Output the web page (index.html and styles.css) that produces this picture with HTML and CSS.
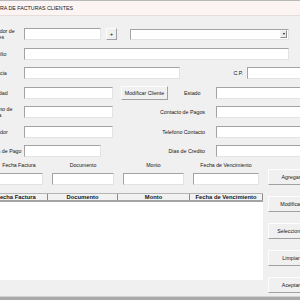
FILE: index.html
```html
<!DOCTYPE html>
<html lang="es">
<head>
    <meta charset="UTF-8">
    <meta name="viewport" content="width=device-width, initial-scale=1.0">
    <title>Captura de Facturas Clientes</title>
    <link rel="stylesheet" href="styles.css">
</head>
<body>
    <div class="window">
        <div class="title">CAPTURA DE FACTURAS CLIENTES</div>

        <div class="form">
            <div class="fields">
                <div class="row">
                    <label class="lbl">Buscador de<br>Clientes</label>
                    <input type="text" class="field w77">
                    <button class="btn plus">+</button>
                    <div class="combo"><span class="arrow"></span></div>
                </div>
                <div class="row">
                    <label class="lbl">Domicilio</label>
                    <input type="text" class="field w265">
                </div>
                <div class="row">
                    <label class="lbl">Provincia</label>
                    <input type="text" class="field w156">
                    <label class="cp">C.P.</label>
                    <input type="text" class="field w90">
                </div>
                <div class="row">
                    <label class="lbl">Localidad</label>
                    <input type="text" class="field w89">
                    <button class="btn modify">Modificar Cliente</button>
                    <label class="estado">Estado</label>
                    <input type="text" class="field w90">
                </div>
                <div class="row">
                    <label class="lbl">Telefono de<br>Oficina</label>
                    <input type="text" class="field w89">
                    <label class="side">Contacto de Pagos</label>
                    <input type="text" class="field w90">
                </div>
                <div class="row">
                    <label class="lbl">Vendedor</label>
                    <input type="text" class="field w89">
                    <label class="side">Telefono Contacto</label>
                    <input type="text" class="field w90">
                </div>
                <div class="row">
                    <label class="lbl">Forma de Pago</label>
                    <input type="text" class="field w77">
                    <label class="side wide">Dias de Credito</label>
                    <input type="text" class="field w90">
                </div>
            </div>

            <div class="lower">
                <div class="invoices">
                    <div class="captions">
                        <span class="w48">Fecha Factura</span>
                        <span class="w62">Documento</span>
                        <span class="w61">Monto</span>
                        <span class="w66">Fecha de Vencimiento</span>
                    </div>
                    <div class="entry">
                        <input type="text" class="field w48">
                        <input type="text" class="field w62">
                        <input type="text" class="field w61">
                        <input type="text" class="field w66">
                    </div>
                    <div class="table">
                        <div class="thead">
                            <div class="th">Fecha Factura</div>
                            <div class="th">Documento</div>
                            <div class="th">Monto</div>
                            <div class="th">Fecha de Vencimiento</div>
                        </div>
                        <div class="tbody"></div>
                    </div>
                </div>
                <div class="actions">
                    <button class="btn action">Agregar</button>
                    <button class="btn action">Modificar</button>
                    <button class="btn action">Seleccionar</button>
                    <button class="btn action">Limpiar</button>
                    <button class="btn action">Aceptar</button>
                </div>
            </div>
        </div>

        <div class="statusbar"></div>
    </div>
</body>
</html>
```

FILE: styles.css
```css
body {
    margin: 0;
    background-color: #f0f0f0;
    font-family: "Liberation Sans", Arial, sans-serif;
    font-size: 5.3px;
    color: #161616;
    overflow: hidden;
}
.window {
    display: flex;
    flex-direction: column;
    width: 340px;
    height: 300px;
    margin-left: -16px;
    box-sizing: border-box;
    border-top: 1px solid #b9b9b9;
}
.title {
    height: 14px;
    line-height: 14px;
    text-indent: -2px;
    background-color: #fcf3f3;
    border-bottom: 1px solid #e6dddd;
}
.form {
    flex: 1;
    padding-top: 12px;
}
.fields {
    display: flex;
    flex-direction: column;
    gap: 7.5px;
}
.row {
    display: flex;
    align-items: center;
    height: 12px;
}
.lbl {
    flex: none;
    width: 40px;
    padding-left: 1px;
    box-sizing: border-box;
    line-height: 6px;
    white-space: nowrap;
}
.field {
    flex: none;
    box-sizing: border-box;
    height: 12px;
    margin: 0;
    padding: 0;
    border: 1px solid;
    border-color: #a3a3a3 #e3e3e3 #e3e3e3 #a3a3a3;
    background-color: #fff;
}
.w48 { width: 48px; }
.w61 { width: 61px; }
.w62 { width: 62px; }
.w66 { width: 66px; }
.w77 { width: 77px; }
.w89 { width: 89px; }
.w90 { width: 90px; }
.w156 { width: 156px; }
.w265 { width: 265px; }
.btn {
    flex: none;
    box-sizing: border-box;
    padding: 0;
    border: 1px solid;
    border-color: #fdfdfd #a0a0a0 #a0a0a0 #fdfdfd;
    background-color: #f0f0f0;
    font-family: inherit;
    font-size: 5.3px;
    color: #161616;
}
.plus {
    width: 11px;
    height: 12px;
    margin-left: 5px;
    font-size: 6px;
}
.combo {
    display: flex;
    justify-content: flex-end;
    align-items: center;
    box-sizing: border-box;
    width: 159px;
    height: 11px;
    margin-left: 13px;
    padding-right: 1px;
    border: 1px solid;
    border-color: #a3a3a3 #e3e3e3 #e3e3e3 #a3a3a3;
    background-color: #fff;
}
.arrow {
    display: flex;
    justify-content: center;
    align-items: center;
    width: 7px;
    height: 8px;
    box-sizing: border-box;
    border: 1px solid;
    border-color: #f4f4f4 #8c8c8c #8c8c8c #f4f4f4;
    background-color: #ececec;
}
.arrow::after {
    content: "";
    border-left: 1.5px solid transparent;
    border-right: 1.5px solid transparent;
    border-top: 2px solid #111;
}
.cp {
    flex: none;
    width: 63px;
    padding-right: 4px;
    text-align: right;
}
.modify {
    width: 47px;
    height: 14px;
    margin-left: 8px;
}
.estado {
    flex: none;
    width: 48px;
    padding-left: 16px;
    box-sizing: border-box;
}
.side {
    flex: none;
    width: 103px;
    padding-right: 11px;
    box-sizing: border-box;
    text-align: right;
}
.side.wide {
    width: 115px;
}
.lower {
    display: flex;
    margin-top: 4px;
}
.invoices {
    flex: none;
    width: 279px;
}
.captions,
.entry {
    display: flex;
    gap: 9px;
    padding-left: 11px;
}
.captions {
    height: 8px;
    line-height: 8px;
    font-size: 5.2px;
}
.captions span {
    flex: none;
    text-align: center;
    white-space: nowrap;
}
.entry {
    margin-top: 4px;
}
.table {
    width: 278px;
    margin-top: 8px;
    margin-left: 1px;
}
.thead {
    display: grid;
    grid-template-columns: 63px 70px 72px 73px;
    border-top: 1px solid #b4b4b4;
    border-bottom: 2px solid #a4a4a4;
    background-color: #f2f2f2;
}
.th {
    height: 6px;
    line-height: 6px;
    border-right: 1px solid #8a8a8a;
    font-size: 5.8px;
    font-weight: bold;
    text-align: center;
    white-space: nowrap;
    overflow: hidden;
}
.tbody {
    height: 78px;
    background-color: #fff;
}
.actions {
    display: flex;
    flex-direction: column;
    gap: 11px;
    margin-top: 8px;
    margin-left: 5px;
}
.action {
    width: 46px;
    height: 16px;
}
.statusbar {
    height: 4px;
    box-sizing: border-box;
    border-top: 1px solid #d2d2d2;
    background-color: #a9a9a9;
}
```
